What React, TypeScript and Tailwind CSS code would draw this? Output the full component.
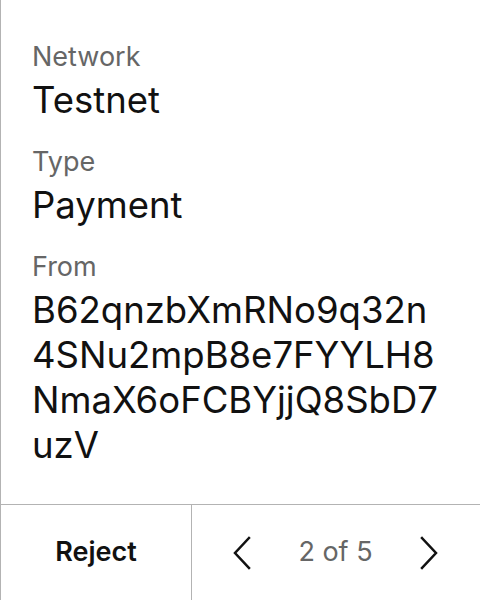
const fields = [
  { label: "Network", value: "Testnet" },
  { label: "Type", value: "Payment" },
  { label: "From", value: "B62qnzbXmRNo9q32n4SNu2mpB8e7FYYLH8NmaX6oFCBYjjQ8SbD7uzV" },
];

function Chevron({ dir }: { dir: "left" | "right" }) {
  return (
    <svg
      width="18"
      height="34"
      viewBox="0 0 18 34"
      fill="none"
      stroke="currentColor"
      strokeWidth={2.5}
      strokeLinecap="square"
      aria-hidden="true"
    >
      <polyline points={dir === "left" ? "16,2 2,17 16,32" : "2,2 16,17 2,32"} />
    </svg>
  );
}

export default function App() {
  return (
    <div
      className="w-[480px] h-[600px] flex flex-col bg-white border-l border-[#b3b3b3] text-[#111]"
      style={{ fontFamily: "Inter, 'Noto Sans', sans-serif" }}
    >
      <div className="flex-1 flex flex-col gap-[24px] pt-[42px] pl-[31px] pr-[32px]">
        {fields.map((f) => (
          <div key={f.label} className="flex flex-col gap-[6px]">
            <span className="text-[27px] leading-[30px] text-[#666]">{f.label}</span>
            <span className="text-[36.5px] leading-[45px] break-all max-w-[410px]">{f.value}</span>
          </div>
        ))}
      </div>
      <div className="h-[96px] flex border-t border-[#b3b3b3]">
        <button
          type="button"
          className="w-[191px] border-r border-[#b3b3b3] text-[27px] font-semibold"
        >
          Reject
        </button>
        <div className="flex-1 flex items-center justify-between pl-[41px] pr-[42px]">
          <button type="button" className="flex">
            <Chevron dir="left" />
          </button>
          <span className="text-[27px] text-[#666]">2 of 5</span>
          <button type="button" className="flex">
            <Chevron dir="right" />
          </button>
        </div>
      </div>
    </div>
  );
}
